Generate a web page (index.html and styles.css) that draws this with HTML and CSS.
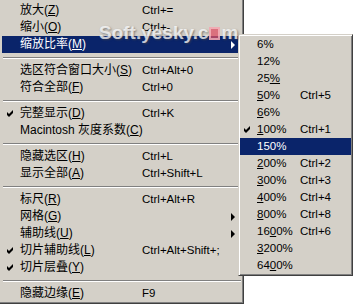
FILE: index.html
```html
<!DOCTYPE html>
<html lang="zh-CN">
<head>
    <meta charset="UTF-8">
    <title>视图菜单</title>
    <link rel="stylesheet" href="styles.css">
</head>
<body>
    <div class="screen">
        <div class="menu main-menu">
            <div class="item"><span class="check"></span><span class="label">放大(<u>Z</u>)</span><span class="key">Ctrl+=</span><span></span></div>
            <div class="item"><span class="check"></span><span class="label">缩小(<u>O</u>)</span><span class="key">Ctrl+-</span><span></span></div>
            <div class="item active"><span class="check"></span><span class="label">缩放比率(<u>M</u>)</span><span class="key"></span><span class="arrow"></span></div>
            <div class="sep"></div>
            <div class="item"><span class="check"></span><span class="label">选区符合窗口大小(<u>S</u>)</span><span class="key">Ctrl+Alt+0</span><span></span></div>
            <div class="item"><span class="check"></span><span class="label">符合全部(<u>F</u>)</span><span class="key">Ctrl+0</span><span></span></div>
            <div class="sep"></div>
            <div class="item"><span class="check"><svg width="7" height="7" viewBox="0 0 7 7"><polygon points="0,2 2,4 6,0 6,3 2,7 0,5"/></svg></span><span class="label">完整显示(<u>D</u>)</span><span class="key">Ctrl+K</span><span></span></div>
            <div class="item"><span class="check"></span><span class="label">Macintosh 灰度系数(<u>C</u>)</span><span class="key"></span><span></span></div>
            <div class="sep"></div>
            <div class="item"><span class="check"></span><span class="label">隐藏选区(<u>H</u>)</span><span class="key">Ctrl+L</span><span></span></div>
            <div class="item"><span class="check"></span><span class="label">显示全部(<u>A</u>)</span><span class="key">Ctrl+Shift+L</span><span></span></div>
            <div class="sep"></div>
            <div class="item"><span class="check"></span><span class="label">标尺(<u>R</u>)</span><span class="key">Ctrl+Alt+R</span><span></span></div>
            <div class="item"><span class="check"></span><span class="label">网格(<u>G</u>)</span><span class="key"></span><span class="arrow"></span></div>
            <div class="item"><span class="check"></span><span class="label">辅助线(<u>U</u>)</span><span class="key"></span><span class="arrow"></span></div>
            <div class="item"><span class="check"><svg width="7" height="7" viewBox="0 0 7 7"><polygon points="0,2 2,4 6,0 6,3 2,7 0,5"/></svg></span><span class="label">切片辅助线(<u>L</u>)</span><span class="key">Ctrl+Alt+Shift+;</span><span></span></div>
            <div class="item"><span class="check"><svg width="7" height="7" viewBox="0 0 7 7"><polygon points="0,2 2,4 6,0 6,3 2,7 0,5"/></svg></span><span class="label">切片层叠(<u>Y</u>)</span><span class="key"></span><span></span></div>
            <div class="sep"></div>
            <div class="item"><span class="check"></span><span class="label">隐藏边缘(<u>E</u>)</span><span class="key">F9</span><span></span></div>
        </div>

        <!-- zoom ratio submenu, opened over the main menu -->
        <div class="menu sub-menu">
            <div class="item"><span class="check"></span><span class="label">6%</span><span class="key"></span></div>
            <div class="item"><span class="check"></span><span class="label">12%</span><span class="key"></span></div>
            <div class="item"><span class="check"></span><span class="label">25<u>%</u></span><span class="key"></span></div>
            <div class="item"><span class="check"></span><span class="label"><u>5</u>0%</span><span class="key">Ctrl+5</span></div>
            <div class="item"><span class="check"></span><span class="label"><u>6</u>6%</span><span class="key"></span></div>
            <div class="item"><span class="check"><svg width="7" height="7" viewBox="0 0 7 7"><polygon points="0,2 2,4 6,0 6,3 2,7 0,5"/></svg></span><span class="label"><u>1</u>00%</span><span class="key">Ctrl+1</span></div>
            <div class="item active"><span class="check"></span><span class="label">150%</span><span class="key"></span></div>
            <div class="item"><span class="check"></span><span class="label"><u>2</u>00%</span><span class="key">Ctrl+2</span></div>
            <div class="item"><span class="check"></span><span class="label"><u>3</u>00%</span><span class="key">Ctrl+3</span></div>
            <div class="item"><span class="check"></span><span class="label"><u>4</u>00%</span><span class="key">Ctrl+4</span></div>
            <div class="item"><span class="check"></span><span class="label"><u>8</u>00%</span><span class="key">Ctrl+8</span></div>
            <div class="item"><span class="check"></span><span class="label">16<u>0</u>0%</span><span class="key">Ctrl+6</span></div>
            <div class="item"><span class="check"></span><span class="label"><u>3</u>200%</span><span class="key"></span></div>
            <div class="item"><span class="check"></span><span class="label">64<u>0</u>0%</span><span class="key"></span></div>
        </div>

        <div class="watermark">Soft.yesky.c<span class="wm-logo"></span>m</div>
    </div>
</body>
</html>
```

FILE: styles.css
```css
body {
    margin: 0;
    background: #fff;
    font-family: "Liberation Sans", "Noto Sans CJK SC", sans-serif;
    color: #000;
}

.screen {
    position: relative;
    width: 354px;
    height: 306px;
    overflow: hidden;
}

.menu {
    background: #d4d0c8;
    box-sizing: border-box;
}

.main-menu {
    width: 244px;
    padding: 2px 1px 1px 2px;
    border-right: 1px solid #404040;
    border-bottom: 1px solid #404040;
    box-shadow: inset -1px -1px 0 #808080;
}

.sub-menu {
    position: absolute;
    left: 238px;
    top: 34px;
    width: 115px;
    padding: 1px;
    border: 1px solid;
    border-color: #d4d0c8 #404040 #404040 #d4d0c8;
    box-shadow: inset 1px 1px 0 #fff, inset -1px -1px 0 #808080;
}

.item {
    display: grid;
    align-items: center;
    height: 17px;
    line-height: 17px;
    white-space: nowrap;
}

.main-menu .item {
    grid-template-columns: 18px 122px 1fr 12px;
}

.sub-menu .item {
    grid-template-columns: 17px 43px 1fr;
}

.item.active {
    background: #0a246a;
    color: #fff;
}

.check {
    display: flex;
    align-items: center;
    padding-left: 5px;
}

.sub-menu .check {
    padding-left: 4px;
}

.check svg {
    fill: currentColor;
}

.label {
    font-size: 12px;
}

.sub-menu .label,
.key {
    font-size: 11.5px;
}

u {
    text-underline-offset: 1px;
}

.arrow {
    width: 0;
    height: 0;
    margin-left: 1px;
    border-left: 4px solid currentColor;
    border-top: 4px solid transparent;
    border-bottom: 4px solid transparent;
}

.sep {
    margin: 4px 1px 3px;
    height: 0;
    border-top: 1px solid #808080;
    border-bottom: 1px solid #fff;
}

.watermark {
    position: absolute;
    left: 99px;
    top: 23px;
    font-family: "Liberation Sans", sans-serif;
    font-weight: bold;
    font-size: 19px;
    line-height: 20px;
    color: rgba(255, 255, 255, 0.75);
    text-shadow: 1px 1px 2px rgba(70, 70, 70, 0.6);
    pointer-events: none;
}

.wm-logo {
    display: inline-block;
    width: 11px;
    height: 13px;
    margin: 0 1px;
    vertical-align: -1px;
    background: rgba(220, 80, 100, 0.75);
    box-shadow: inset 0 0 0 2px rgba(255, 210, 215, 0.6);
}
```
